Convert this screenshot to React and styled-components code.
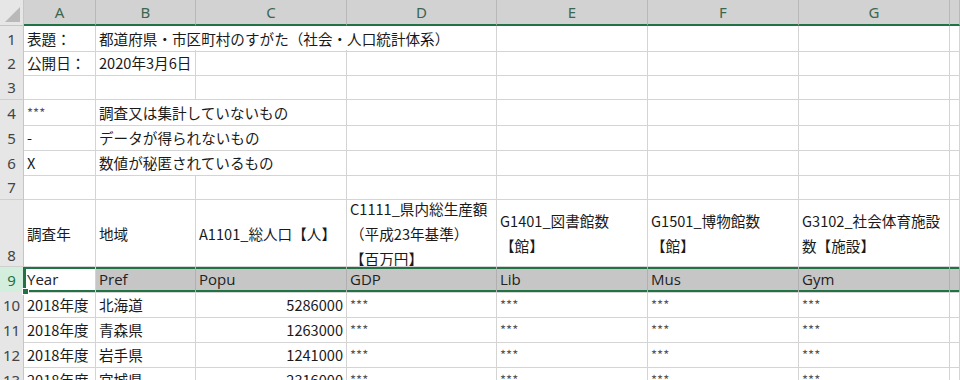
import React from "react";
import styled, { createGlobalStyle, css } from "styled-components";

const GREEN = "#217346";
const GRID = "#d4d4d4";
const COLS = "24px 72px 100px 151px 150px 151px 151px 151px 1fr";
const FONT = `"Noto Sans CJK JP", "Noto Sans", sans-serif`;

const GlobalStyle = createGlobalStyle`
  body {
    margin: 0;
    background: #ffffff;
    overflow: hidden;
    font-family: ${FONT};
  }
`;

const columns = ["A", "B", "C", "D", "E", "F", "G", ""];

const rows = [
  { n: 1, h: 24, cells: [{ t: "表題：" }, { t: "都道府県・市区町村のすがた（社会・人口統計体系）", span: 3 }, {}, {}, {}, {}] },
  { n: 2, cells: [{ t: "公開日：" }, { t: "2020年3月6日" }, {}, {}, {}, {}, {}, {}] },
  { n: 3, cells: [{}, {}, {}, {}, {}, {}, {}, {}] },
  { n: 4, cells: [{ t: "***", small: true }, { t: "調査又は集計していないもの", span: 2 }, {}, {}, {}, {}, {}] },
  { n: 5, cells: [{ t: "-" }, { t: "データが得られないもの", span: 2 }, {}, {}, {}, {}, {}] },
  { n: 6, cells: [{ t: "X" }, { t: "数値が秘匿されているもの", span: 2 }, {}, {}, {}, {}, {}] },
  { n: 7, cells: [{}, {}, {}, {}, {}, {}, {}, {}] },
  {
    n: 8,
    h: 67,
    tall: true,
    cells: [
      { t: ["調査年"] },
      { t: ["地域"] },
      { t: ["A1101_総人口【人】"] },
      { t: ["C1111_県内総生産額", "（平成23年基準）", "【百万円】"] },
      { t: ["G1401_図書館数", "【館】"] },
      { t: ["G1501_博物館数", "【館】"] },
      { t: ["G3102_社会体育施設", "数【施設】"] },
      {},
    ],
  },
  {
    n: 9,
    selected: true,
    cells: [{ t: "Year", active: true }, { t: "Pref" }, { t: "Popu" }, { t: "GDP" }, { t: "Lib" }, { t: "Mus" }, { t: "Gym" }, {}],
  },
  ...[
    [10, "北海道", "5286000"],
    [11, "青森県", "1263000"],
    [12, "岩手県", "1241000"],
    [13, "宮城県", "2316000"],
  ].map(([n, pref, pop]) => ({
    n,
    cells: [
      { t: "2018年度" },
      { t: pref },
      { t: pop, right: true },
      { t: "***", small: true },
      { t: "***", small: true },
      { t: "***", small: true },
      { t: "***", small: true },
      {},
    ],
  })),
];

const App = () => {
  return (
    <>
      <GlobalStyle />
      <Sheet>
        <HeaderRow>
          <Corner>
            <CornerMark />
          </Corner>
          {columns.map((c, i) => (
            <ColHead key={i}>{c}</ColHead>
          ))}
        </HeaderRow>
        {rows.map((row) => (
          <Row key={row.n} $h={row.h || 25}>
            <RowHead $selected={row.selected} $tall={row.tall}>
              {row.n}
            </RowHead>
            {row.cells.map((cell, i) => (
              <Cell
                key={i}
                $span={cell.span}
                $right={cell.right}
                $small={cell.small}
                $tall={row.tall}
                $selected={row.selected}
                $active={cell.active}
              >
                {Array.isArray(cell.t)
                  ? cell.t.map((line, j) => <Line key={j}>{line}</Line>)
                  : cell.t}
                {cell.active && <FillHandle />}
              </Cell>
            ))}
          </Row>
        ))}
      </Sheet>
    </>
  );
};

export default App;

const Sheet = styled.div`
  width: 960px;
  height: 380px;
  overflow: hidden;
  display: flex;
  flex-direction: column;
  font-family: ${FONT};
  color: #1a1a1a;
`;

const HeaderRow = styled.div`
  display: grid;
  grid-template-columns: ${COLS};
  height: 26px;
  flex-shrink: 0;
`;

const Corner = styled.div`
  position: relative;
  background: #e6e6e6;
  border-right: 1px solid #c6c6c6;
  border-bottom: 1px solid #c6c6c6;
`;

const CornerMark = styled.div`
  position: absolute;
  right: 3px;
  bottom: 3px;
  width: 0;
  height: 0;
  border-left: 15px solid transparent;
  border-bottom: 15px solid #b9b9b9;
`;

const ColHead = styled.div`
  display: flex;
  align-items: center;
  justify-content: center;
  background: #d2d2d2;
  border-right: 1px solid #b8b8b8;
  border-bottom: 2px solid ${GREEN};
  font-family: "Noto Sans", "Liberation Sans", sans-serif;
  font-size: 15px;
  color: #3b6650;
  padding-bottom: 1px;
  box-sizing: border-box;
`;

const Row = styled.div`
  display: grid;
  grid-template-columns: ${COLS};
  height: ${(p) => p.$h}px;
  flex-shrink: 0;
`;

const RowHead = styled.div`
  display: flex;
  justify-content: center;
  align-items: ${(p) => (p.$tall ? "flex-end" : "center")};
  padding-bottom: ${(p) => (p.$tall ? "1px" : "0")};
  background: ${(p) => (p.$selected ? "#d3eedd" : "#e6e6e6")};
  color: ${(p) => (p.$selected ? GREEN : "#444")};
  border-bottom: 1px solid #cfcfcf;
  border-right: 1px solid ${(p) => (p.$selected ? GREEN : "#c6c6c6")};
  font-family: "Noto Sans", "Liberation Sans", sans-serif;
  font-size: 15px;
  box-sizing: border-box;
  overflow: hidden;
`;

const Cell = styled.div`
  position: relative;
  grid-column: span ${(p) => p.$span || 1};
  display: flex;
  flex-direction: column;
  justify-content: center;
  align-items: ${(p) => (p.$right ? "flex-end" : "flex-start")};
  padding: 0 3px 0 3px;
  border-right: 1px solid ${GRID};
  border-bottom: 1px solid ${GRID};
  font-size: ${(p) => (p.$small ? "13px" : "14.6px")};
  line-height: 25px;
  white-space: nowrap;
  overflow: ${(p) => (p.$tall ? "hidden" : "visible")};
  box-sizing: border-box;
  color: ${(p) => (p.$small ? "#555" : "#1a1a1a")};

  ${(p) =>
    p.$selected &&
    css`
      font-family: "Open Sans", "Noto Sans", sans-serif;
      font-size: 15px;
      color: #222;
      background: ${p.$active ? "#ffffff" : "#c6c6c6"};
      box-shadow: inset 0 2px 0 ${GREEN}, inset 0 -2px 0 ${GREEN}
        ${p.$active ? `, inset 2px 0 0 ${GREEN}` : ""};
      border-right-color: ${p.$active ? GRID : "#b0b0b0"};
    `}
`;

const Line = styled.div`
  line-height: 25px;
`;

const FillHandle = styled.div`
  position: absolute;
  left: -2px;
  bottom: -3px;
  width: 5px;
  height: 5px;
  background: ${GREEN};
  border: 1px solid #ffffff;
`;
